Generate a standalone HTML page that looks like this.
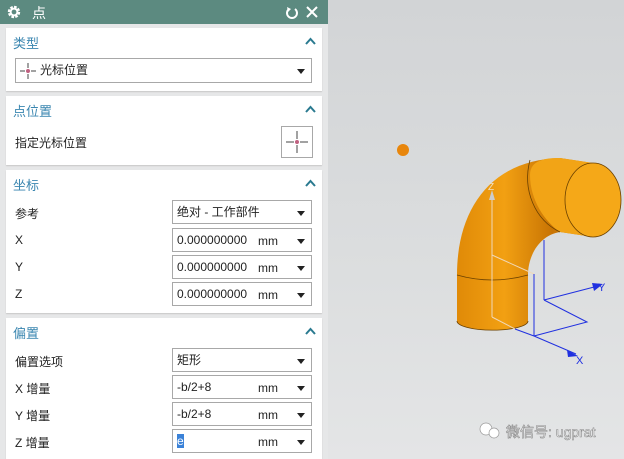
<!DOCTYPE html>
<html><head><meta charset="utf-8"><style>
*{margin:0;padding:0;box-sizing:border-box}
body{width:624px;height:459px;overflow:hidden;position:relative;font-family:"Liberation Sans","Noto Sans CJK SC",sans-serif;font-size:12px;color:#222;background:linear-gradient(180deg,#d2d4d6 0%,#dcdedf 60%,#e4e5e6 100%)}
#panel{position:absolute;left:0;top:0;width:328px;height:459px;background:#e6e7e8}
#title{position:absolute;left:0;top:0;width:328px;height:24px;background:#5c8a80;color:#fff}
.sec{position:absolute;left:6px;width:316px;background:#fff;box-shadow:0 1px 1px #c8c8c8}
.hd{position:absolute;left:7px;top:5px;color:#3a86b0;font-size:13px}
.car{position:absolute;right:6px;top:9px}
.lb{position:absolute;left:9px;font-size:12px}
.dd{position:absolute;border:1px solid #a8a8a8;background:#fff;height:24px;font-size:12px;line-height:22px;padding-left:4px}
.dd:after{content:"";position:absolute;right:6px;top:10px;border-left:4px solid transparent;border-right:4px solid transparent;border-top:5px solid #222}
.mm{position:absolute;left:85px;top:1px}
</style></head><body>
<div id="panel">
<div id="title">
<svg style="position:absolute;left:7px;top:5px" width="14" height="14" viewBox="0 0 14 14"><circle cx="7" cy="7" r="4.6" fill="none" stroke="#fff" stroke-width="3.2" stroke-dasharray="2.4 1.2"/><circle cx="7" cy="7" r="3.4" fill="none" stroke="#fff" stroke-width="2"/></svg>
<span style="position:absolute;left:32px;top:3px;font-size:14px">点</span>
<svg style="position:absolute;left:285px;top:6px" width="14" height="14" viewBox="0 0 14 14"><path d="M4 3 A5 5 0 1 0 10 3" fill="none" stroke="#fff" stroke-width="2"/><path d="M2 1 L6 3 L3 6Z" fill="#fff"/></svg>
<svg style="position:absolute;left:306px;top:6px" width="12" height="12" viewBox="0 0 12 12"><path d="M1 1L11 11M11 1L1 11" stroke="#fff" stroke-width="2"/></svg>
</div>
<div class="sec" style="top:28px;height:63px"><div class="hd">类型</div><svg class="car" width="11" height="8" viewBox="0 0 11 8"><path d="M1 7L5.5 2L10 7" fill="none" stroke="#2a7a90" stroke-width="2"/></svg>
<div class="dd" style="left:9px;top:30px;width:297px;height:25px;padding-left:24px;line-height:23px">光标位置
<svg style="position:absolute;left:4px;top:4px" width="16" height="16" viewBox="0 0 16 16"><path d="M0 8h5M11 8h5M8 0v5M8 11v5" stroke="#444"/><circle cx="8" cy="8" r="2" fill="#c06080"/></svg></div></div>
<div class="sec" style="top:96px;height:69px"><div class="hd">点位置</div><svg class="car" width="11" height="8" viewBox="0 0 11 8"><path d="M1 7L5.5 2L10 7" fill="none" stroke="#2a7a90" stroke-width="2"/></svg>
<div class="lb" style="top:38px">指定光标位置</div>
<div style="position:absolute;left:275px;top:30px;width:32px;height:32px;border:1px solid #a8a8a8">
<svg style="position:absolute;left:3px;top:3px" width="24" height="24" viewBox="0 0 24 24"><path d="M1 12h8M15 12h8M12 1v8M12 15v8" stroke="#444"/><circle cx="12" cy="12" r="2" fill="#c06080"/></svg></div></div>
<div class="sec" style="top:170px;height:143px"><div class="hd">坐标</div><svg class="car" width="11" height="8" viewBox="0 0 11 8"><path d="M1 7L5.5 2L10 7" fill="none" stroke="#2a7a90" stroke-width="2"/></svg>
<div class="lb" style="top:35px">参考</div><div class="dd" style="left:166px;top:30px;width:140px">绝对 - 工作部件</div>
<div class="lb" style="top:63px">X</div><div class="dd" style="left:166px;top:58px;width:140px">0.000000000<span class="mm">mm</span></div>
<div class="lb" style="top:90px">Y</div><div class="dd" style="left:166px;top:85px;width:140px">0.000000000<span class="mm">mm</span></div>
<div class="lb" style="top:117px">Z</div><div class="dd" style="left:166px;top:112px;width:140px">0.000000000<span class="mm">mm</span></div>
</div>
<div class="sec" style="top:318px;height:141px"><div class="hd">偏置</div><svg class="car" width="11" height="8" viewBox="0 0 11 8"><path d="M1 7L5.5 2L10 7" fill="none" stroke="#2a7a90" stroke-width="2"/></svg>
<div class="lb" style="top:35px">偏置选项</div><div class="dd" style="left:166px;top:30px;width:140px">矩形</div>
<div class="lb" style="top:62px">X 增量</div><div class="dd" style="left:166px;top:57px;width:140px">-b/2+8<span class="mm">mm</span></div>
<div class="lb" style="top:89px">Y 增量</div><div class="dd" style="left:166px;top:84px;width:140px">-b/2+8<span class="mm">mm</span></div>
<div class="lb" style="top:116px">Z 增量</div><div class="dd" style="left:166px;top:111px;width:140px"><span style="background:#3b82d8;color:#fff">e</span><span class="mm">mm</span></div>
</div>
</div>
<svg style="position:absolute;left:0;top:0" width="624" height="459" viewBox="0 0 624 459">
<defs><linearGradient id="g" x1="0" x2="1"><stop offset="0" stop-color="#e08a08"/><stop offset=".35" stop-color="#f2a012"/><stop offset=".7" stop-color="#c87404"/><stop offset="1" stop-color="#e89410"/></linearGradient></defs>
<circle cx="403" cy="150" r="6" fill="#e8860c"/>
<path d="M457 321 L457 275 C457 210 490 160 560 158 L593 163 L593 237 L560 232 C540 235 528 255 528 275 L528 321 A35 9 0 0 1 457 321Z" fill="url(#g)"/>
<path d="M530 175 C530 160 545 158 560 158 L593 163 L593 237 L560 232 C545 222 530 200 530 175Z" fill="#f2a416"/>
<ellipse cx="593" cy="200" rx="28" ry="37" fill="#f5a818" stroke="#6a4000" stroke-width=".8"/>
<path d="M530 160 C522 190 535 220 560 232" fill="none" stroke="#6a4000" stroke-width=".8"/>
<path d="M457 275 Q492 285 528 275" fill="none" stroke="#6a4000" stroke-width=".8"/>
<path d="M457 321 A35 9 0 0 0 528 321" fill="none" stroke="#6a4000" stroke-width=".8"/>
<g stroke="#f0d8b8" stroke-width="1" fill="none"><path d="M492 317V196M492 255L534 274M492 317L515 329"/></g>
<path d="M489 200L492 190L495 200Z" fill="#ccc"/><text x="488" y="190" fill="#f0e0c0" font-size="10">Z</text>
<g stroke="#2030e0" stroke-width="1" fill="none"><path d="M544 240V300M534 274V336M544 300L587 322L534 336M544 300L598 286M515 329L534 336L576 354"/></g>
<path d="M592 283L603 284L594 291Z M567 350L578 356L568 357Z" fill="#2030e0"/>
<text x="598" y="291" fill="#2030e0" font-size="11">Y</text><text x="576" y="364" fill="#2030e0" font-size="11">X</text>
<text x="506" y="437" fill="#fff" font-size="14" style="font-family:'Liberation Sans','Noto Sans CJK SC',sans-serif" stroke="#8a8a8a" stroke-width=".6">微信号: ugprat</text>
<circle cx="486" cy="429" r="6" fill="#fff" stroke="#999" stroke-width=".7"/><circle cx="494" cy="433" r="5" fill="#fff" stroke="#999" stroke-width=".7"/>
</svg>
</body></html>
